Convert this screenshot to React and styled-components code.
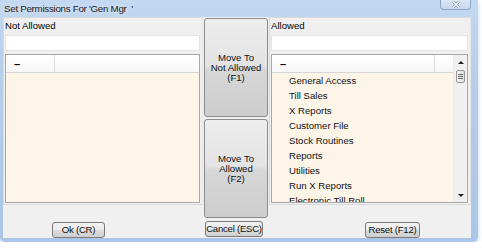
import React from 'react';
import styled, { createGlobalStyle, css } from 'styled-components';

const GlobalStyle = createGlobalStyle`
    html, body {
        margin: 0;
        padding: 0;
        background: #ffffff;
    }
    body {
        font-family: "Liberation Sans", Arial, sans-serif;
        font-size: 9.6px;
        color: #000;
    }
`;

const Window = styled.div`
    width: 478px;
    height: 242px;
    box-sizing: border-box;
    padding: 0 7px 4px 3px;
    display: flex;
    flex-direction: column;
    background: linear-gradient(to bottom, #c3d8f1 0%, #b8cfea 30%, #aac5e6 100%);
    border-radius: 0 0 5px 5px;
    box-shadow: 0 2px 4px rgba(120, 160, 210, 0.45);
`;

const TitleBar = styled.div`
    height: 17px;
    display: flex;
    align-items: flex-start;
    justify-content: space-between;
`;

const Title = styled.span`
    padding: 3px 0 0 1px;
    font-size: 9.8px;
    letter-spacing: -0.3px;
    color: #1c1c1c;
    white-space: pre;
    text-shadow: 0 0 6px rgba(255, 255, 255, 0.9);
`;

const CloseButton = styled.div`
    width: 31px;
    height: 10px;
    box-sizing: border-box;
    border: 1px solid #8ea4c0;
    border-top: none;
    border-radius: 0 0 4px 4px;
    background: linear-gradient(to bottom, #dbe6f4, #c8d8ec);
    display: flex;
    align-items: center;
    justify-content: center;
`;

const Client = styled.div`
    flex: 1;
    background: #f0f0f0;
    display: grid;
    grid-template-columns: 200px 66px 202px;
`;

const Column = styled.div`
    display: flex;
    flex-direction: column;
`;

const Panel = styled.div`
    height: 188px;
    box-sizing: border-box;
    border: 1px solid #dadada;
    border-right-color: #e6e6e6;
    padding: 0 1px;
    display: flex;
    flex-direction: column;
`;

const Label = styled.div`
    height: 17px;
    line-height: 16px;
`;

const TextBox = styled.div`
    height: 16px;
    box-sizing: border-box;
    background: #fff;
    border: 1px solid #e4e4e4;
    margin-right: 1px;
`;

const Grid = styled.div`
    margin-top: 3px;
    margin-right: 1px;
    height: 149px;
    box-sizing: border-box;
    border: 1px solid #a8a8a8;
    background: #fdf5e8;
    display: flex;
    overflow: hidden;
`;

const GridBody = styled.div`
    flex: 1;
    display: flex;
    flex-direction: column;
    min-width: 0;
`;

const Header = styled.div`
    height: 18px;
    flex-shrink: 0;
    display: flex;
    background: linear-gradient(to bottom, #ffffff, #f7f7f7);
    border-bottom: 1px solid #d6d6d6;
    box-sizing: border-box;
`;

const HeaderCell = styled.div`
    width: ${({ w }) => (w ? `${w}px` : 'auto')};
    flex: ${({ w }) => (w ? 'none' : 1)};
    border-right: ${({ last }) => (last ? 'none' : '1px solid #dcdcdc')};
    display: flex;
    align-items: center;
    padding-left: 8px;
    font-weight: bold;
    font-size: 11px;
`;

const Row = styled.div`
    height: 15px;
    flex-shrink: 0;
    line-height: 15px;
    padding-left: 17px;
    white-space: nowrap;
    color: #111;
`;

const ScrollBar = styled.div`
    width: 13px;
    flex-shrink: 0;
    background: #f0f0f0;
    border-left: 1px solid #ececec;
    display: flex;
    flex-direction: column;
    align-items: center;
    position: relative;
`;

const Arrow = styled.div`
    width: 0;
    height: 0;
    border-left: 3px solid transparent;
    border-right: 3px solid transparent;
    ${({ down }) => (
        down ? css`
            border-top: 3px solid #222;
            position: absolute;
            bottom: 5px;
        ` : css`
            border-bottom: 3px solid #222;
            margin-top: 6px;
        `
    )}
`;

const Thumb = styled.div`
    width: 9px;
    height: 13px;
    margin-top: 6px;
    box-sizing: border-box;
    border: 1px solid #979797;
    border-radius: 2px;
    background: linear-gradient(to right, #f3f3f3, #dcdcdc);
    display: flex;
    flex-direction: column;
    justify-content: center;
    align-items: center;
    gap: 1px;
`;

const Grip = styled.span`
    width: 5px;
    height: 1px;
    background: #6a6a6a;
`;

const aeroButton = css`
    box-sizing: border-box;
    border: 1px solid #7a7a7a;
    border-radius: 3px;
    background: linear-gradient(to bottom, #f2f2f2 0%, #ebebeb 50%, #dddddd 50%, #cfcfcf 100%);
    font-family: inherit;
    font-size: 9.6px;
    color: #111;
    padding: 0;
    cursor: default;
`;

const BigButton = styled.button`
    ${aeroButton}
    height: 99px;
    margin: ${({ first }) => (first ? '1px 1px 0 1px' : '2px 1px 0 1px')};
    line-height: 10px;
    background: linear-gradient(to bottom, #ededed 0%, #e3e3e3 48%, #d7d7d7 52%, #cdcdcd 100%);
    border-color: #8c8c8c;
`;

const SmallButton = styled.button`
    ${aeroButton}
    height: 16px;
    width: ${({ w }) => w}px;
    margin-left: ${({ left }) => left}px;
    margin-top: ${({ top }) => top}px;
    line-height: 14px;
    white-space: nowrap;
    letter-spacing: -0.25px;
    overflow: visible;
`;

const allowed = [
    'General Access',
    'Till Sales',
    'X Reports',
    'Customer File',
    'Stock Routines',
    'Reports',
    'Utilities',
    'Run X Reports',
    'Electronic Till Roll',
];

const App = () => (
    <>
        <GlobalStyle />
        <Window>
            <TitleBar>
                <Title>Set Permissions For 'Gen Mgr  '</Title>
                <CloseButton>
                    <svg width="10" height="7" viewBox="0 0 10 7">
                        <path d="M2 0.5 L8 6.5 M8 0.5 L2 6.5" stroke="#8a9cb4" strokeWidth="2.6" />
                        <path d="M2 0.5 L8 6.5 M8 0.5 L2 6.5" stroke="#f4f7fb" strokeWidth="1.2" />
                    </svg>
                </CloseButton>
            </TitleBar>
            <Client>
                <Column>
                    <Panel>
                        <Label>Not Allowed</Label>
                        <TextBox />
                        <Grid>
                            <GridBody>
                                <Header>
                                    <HeaderCell w={40}>–</HeaderCell>
                                    <HeaderCell last />
                                </Header>
                            </GridBody>
                        </Grid>
                    </Panel>
                    <SmallButton w={53} left={49} top={17}>Ok (CR)</SmallButton>
                </Column>
                <Column>
                    <BigButton first>Move To<br />Not Allowed<br />(F1)</BigButton>
                    <BigButton>Move To<br />Allowed<br />(F2)</BigButton>
                    <SmallButton w={58} left={2} top={3}>Cancel (ESC)</SmallButton>
                </Column>
                <Column>
                    <Panel>
                        <Label>Allowed</Label>
                        <TextBox />
                        <Grid>
                            <GridBody>
                                <Header>
                                    <HeaderCell w={154}>–</HeaderCell>
                                    <HeaderCell last />
                                </Header>
                                {allowed.map((name) => (
                                    <Row key={name}>{name}</Row>
                                ))}
                            </GridBody>
                            <ScrollBar>
                                <Arrow />
                                <Thumb>
                                    <Grip />
                                    <Grip />
                                    <Grip />
                                </Thumb>
                                <Arrow down />
                            </ScrollBar>
                        </Grid>
                    </Panel>
                    <SmallButton w={55} left={96} top={17}>Reset (F12)</SmallButton>
                </Column>
            </Client>
        </Window>
    </>
);

export default App;
